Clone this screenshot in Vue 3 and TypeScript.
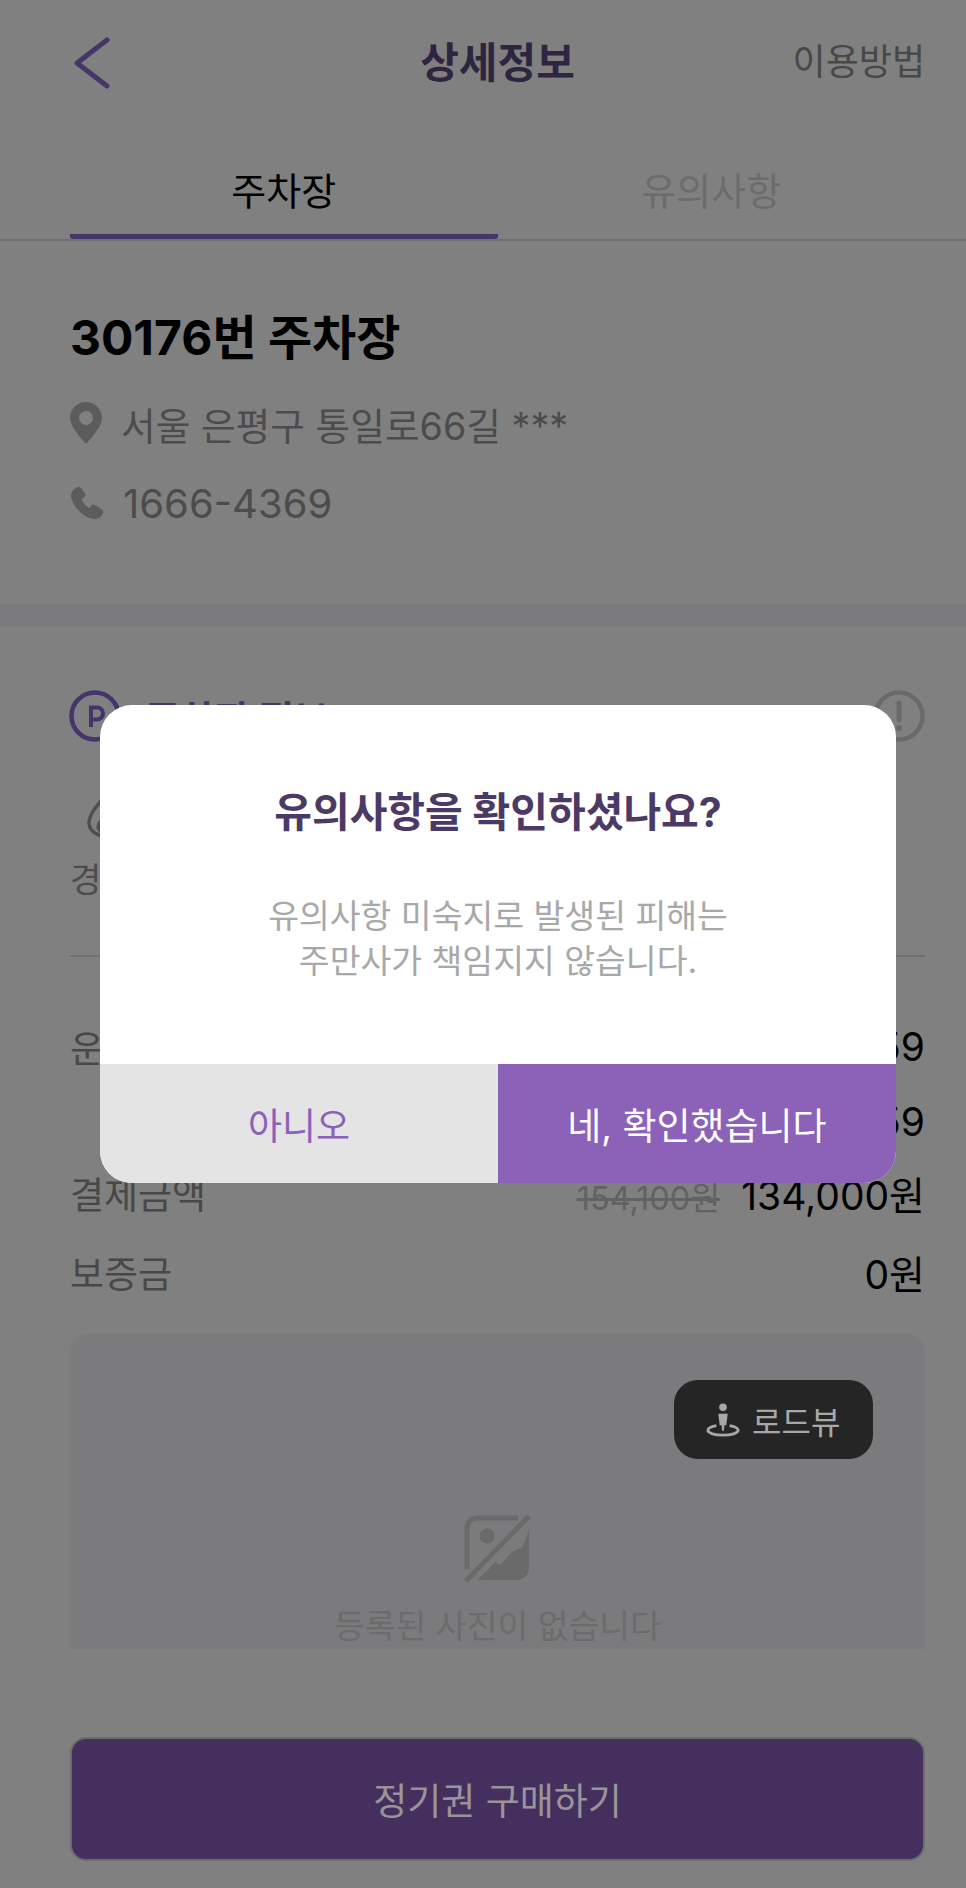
<script setup lang="ts">
interface PriceRow {
  label: string;
  value: string;
  old?: string;
}

const rows: PriceRow[] = [
  { label: '운영시간', value: '23:59' },
  { label: '', value: '23:59' },
  { label: '결제금액', value: '134,000원', old: '154,100원' },
  { label: '보증금', value: '0원' },
];
</script>

<template>
  <div class="page">
    <header class="top">
      <svg class="back" width="36" height="52" viewBox="0 0 36 52" fill="none">
        <path d="M33 3 L3 26 L33 49" stroke="#47346a" stroke-width="5" stroke-linecap="round" stroke-linejoin="round" />
      </svg>
      <h1>상세정보</h1>
      <span class="guide">이용방법</span>
    </header>

    <nav class="tabs">
      <div class="tab active">주차장</div>
      <div class="tab">유의사항</div>
    </nav>

    <section class="info">
      <h2>30176번 주차장</h2>
      <div class="info-row addr">
        <svg width="32" height="42" viewBox="0 0 32 42">
          <path fill="#5c5c5c" fill-rule="evenodd" d="M16 0C7 0 0 7 0 16c0 6 5 14 16 26C27 30 32 22 32 16 32 7 25 0 16 0zm0 9a7 7 0 1 1 0 14 7 7 0 0 1 0-14z" />
        </svg>
        <span>서울 은평구 통일로66길 ***</span>
      </div>
      <div class="info-row phone">
        <svg width="34" height="34" viewBox="0 0 34 34">
          <path fill="#5c5c5c" d="M8 1C5 2 1 5 1 10c1 10 13 23 24 23 4 0 7-3 8-6 .5-2 0-3-2-4l-6-4c-1.500-1-3-.5-4 1l-1.500 2c-4.500-2-6.500-5-8-9L14 11.500c1.500-1 2-2.500 1-4L11 2C10 1 9 .7 8 1z" />
        </svg>
        <span>1666-4369</span>
      </div>
    </section>

    <div class="band"></div>

    <section class="detail">
      <div class="detail-head">
        <svg width="52" height="52" viewBox="0 0 52 52" fill="none">
          <circle cx="26" cy="26" r="23.500" stroke="#47346a" stroke-width="4.500" />
          <path d="M22 37V17.500h6a6 6 0 0 1 0 12h-6" stroke="#47346a" stroke-width="4" />
        </svg>
        <span class="detail-title">주차장 정보</span>
        <svg class="warn" width="52" height="52" viewBox="0 0 52 52" fill="none">
          <circle cx="26" cy="26" r="23.500" stroke="#6a6a6a" stroke-width="4.500" />
          <path d="M26 13v17" stroke="#6a6a6a" stroke-width="5" stroke-linecap="round" />
          <circle cx="26" cy="38" r="3" fill="#6a6a6a" />
        </svg>
      </div>

      <div class="feature">
        <svg class="feature-icon" width="50" height="50" viewBox="0 0 50 50" fill="none">
          <path d="M18 6C10 16 2 24 2 33c0 8 9 14 21 14s19-6 19-14c0-9-8-17-14-27M14 42c-6-6-1-14 9-14s9 7 4 10" stroke="#4f4f4f" stroke-width="3.500" />
        </svg>
        <span>경차</span>
      </div>

      <div class="divider"></div>

      <div v-for="(row, i) in rows" :key="i" class="price-row" :class="{ paid: row.old }">
        <span class="price-label">{{ row.label }}</span>
        <span class="price-value">
          <s v-if="row.old" class="old">{{ row.old }}</s>
          {{ row.value }}
        </span>
      </div>

      <div class="photo">
        <div class="roadview">
          <svg width="34" height="35" viewBox="0 0 36 36" fill="none">
            <circle cx="18" cy="5" r="4" fill="#a8a8a8" />
            <path d="M13 12h10l-1.500 12h-2l-.5 6h-2l-.5-6h-2z" fill="#a8a8a8" />
            <path d="M11 24.500C5.500 25.500 2 27 2 29.500 2 32.500 9 34.500 18 34.500s16-2 16-5C34 27 30.500 25.500 25 24.500" stroke="#a8a8a8" stroke-width="3" />
          </svg>
          <span>로드뷰</span>
        </div>
        <svg class="no-photo" width="67" height="67" viewBox="0 0 67 67" fill="none">
          <path d="M54 3H14C7 3 3 7 3 14v40" stroke="#6a6a6a" stroke-width="5" />
          <circle cx="23" cy="21" r="7.500" fill="#6a6a6a" />
          <path d="M65 14v38c0 8-5 13-13 13H13l12-11 6-7c3 3 5 3 7 1l10-11c4-3 7-2 9-4 4-4 5-10 8-19z" fill="#6a6a6a" />
          <path d="M65 1 2 66" stroke="#6a6a6a" stroke-width="5" />
        </svg>
        <p class="no-photo-text">등록된 사진이 없습니다</p>
      </div>

      <button class="buy">정기권 구매하기</button>
    </section>

    <div class="dialog-wrap">
      <div class="dialog">
        <div class="dialog-body">
          <h3>유의사항을 확인하셨나요?</h3>
          <p>유의사항 미숙지로 발생된 피해는<br />주만사가 책임지지 않습니다.</p>
        </div>
        <div class="dialog-actions">
          <button class="no">아니오</button>
          <button class="yes">네, 확인했습니다</button>
        </div>
      </div>
    </div>
  </div>
</template>

<style>
html,
body {
  margin: 0;
  background: #808080;
}
</style>

<style scoped>
* {
  box-sizing: border-box;
}
.page {
  position: relative;
  width: 966px;
  height: 1888px;
  overflow: hidden;
  background: #808080;
  font-family: Inter, "Noto Sans CJK KR", sans-serif;
  color: #000;
}
.top {
  height: 124px;
  padding: 0 41px 6px 70px;
  display: grid;
  grid-template-columns: 1fr auto 1fr;
  align-items: center;
}
.back {
  margin: 8px 0 0 4px;
}
h1 {
  margin: 0;
  font-size: 42px;
  font-weight: 700;
  color: #2e2640;
}
.guide {
  justify-self: end;
  font-size: 36px;
  color: #484848;
}
.tabs {
  padding: 0 41px 0 70px;
  display: grid;
  grid-template-columns: 1fr 1fr;
  border-bottom: 2px solid #707070;
}
.tab {
  height: 115px;
  padding-top: 41px;
  font-size: 38px;
  line-height: 52px;
  text-align: center;
  color: #6c6c6c;
}
.tab.active {
  color: #000;
  border-bottom: 5px solid #47346a;
  border-radius: 0 0 3px 3px;
}
.info {
  padding: 69px 41px 76px 70px;
}
h2 {
  margin: 0;
  font-size: 48px;
  line-height: 56px;
  font-weight: 700;
  color: #000;
}
.info-row {
  display: flex;
  align-items: center;
  height: 50px;
  color: #4c4c4c;
}
.addr {
  margin-top: 32px;
  gap: 19px;
  font-size: 37.700px;
}
.phone {
  margin-top: 30px;
  gap: 19px;
  font-size: 40px;
}
.band {
  height: 22px;
  background: #7b7b7d;
}
.detail {
  padding: 64px 41px 0 69px;
}
.detail-head {
  display: flex;
  align-items: center;
  height: 52px;
  gap: 24px;
}
.detail-title {
  font-size: 38px;
  font-weight: 700;
  color: #47346a;
}
.warn {
  margin-left: auto;
}
.feature {
  margin-top: 48px;
  margin-left: 1px;
  width: 100px;
  display: flex;
  flex-direction: column;
  font-size: 34px;
  line-height: 44px;
  color: #4c4c4c;
}
.feature-icon {
  margin-left: 17px;
  margin-bottom: 18px;
}
.divider {
  margin: 53px 0 0 1px;
  height: 2px;
  background: #707070;
}
.price-row {
  height: 75px;
  margin-left: 1px;
  display: flex;
  align-items: center;
  justify-content: space-between;
  font-size: 37px;
}
.divider + .price-row {
  margin-top: 52px;
}
.price-row.paid {
  margin-top: -4px;
  margin-bottom: 4px;
}
.price-label {
  color: #484848;
}
.price-value {
  font-size: 39px;
  color: #000;
}
.old {
  font-size: 32.500px;
  color: #626262;
  margin-right: 10px;
}
.photo {
  position: relative;
  margin: 24px 0 0 1px;
  height: 316px;
  padding-top: 182px;
  overflow: hidden;
  background: #7b7b7d;
  border-radius: 20px 20px 0 0;
  text-align: center;
}
.no-photo {
  display: block;
  margin: 0 auto;
}
.no-photo-text {
  margin: 21px 0 0;
  font-size: 33.500px;
  line-height: 46px;
  color: #6c6c6c;
}
.roadview {
  position: absolute;
  top: 47px;
  right: 52px;
  width: 199px;
  height: 79px;
  padding-left: 32px;
  display: flex;
  align-items: center;
  gap: 12px;
  background: #252525;
  border-radius: 24px;
  font-size: 32px;
  color: #a8a8a8;
}
.buy {
  display: block;
  width: calc(100% - 1px);
  height: 124px;
  margin: 88px 0 0 1px;
  padding: 0;
  background: #442f5e;
  border: 2px solid #6c6c6c;
  border-radius: 16px;
  font: inherit;
  font-size: 37px;
  color: #9a949a;
}
.dialog-wrap {
  position: absolute;
  inset: 0;
  padding-left: 30px;
  display: flex;
  align-items: center;
  justify-content: center;
}
.dialog {
  width: 796px;
  height: 478px;
  background: #fff;
  border-radius: 32px;
  overflow: hidden;
  display: flex;
  flex-direction: column;
}
.dialog-body {
  flex: 1;
  text-align: center;
}
h3 {
  margin: 80px 0 0;
  font-size: 41px;
  line-height: 54px;
  font-weight: 700;
  color: #4c3a66;
}
.dialog-body p {
  margin: 55px 0 0;
  font-size: 33.500px;
  line-height: 45px;
  color: #a8a8a8;
}
.dialog-actions {
  height: 119px;
  display: grid;
  grid-template-columns: 1fr 1fr;
}
.dialog-actions button {
  border: 0;
  padding: 0;
  font: inherit;
  font-size: 37px;
}
.no {
  background: #e4e4e4;
  color: #8c62b8;
}
.yes {
  background: #8c62b8;
  color: #fff;
}
</style>
